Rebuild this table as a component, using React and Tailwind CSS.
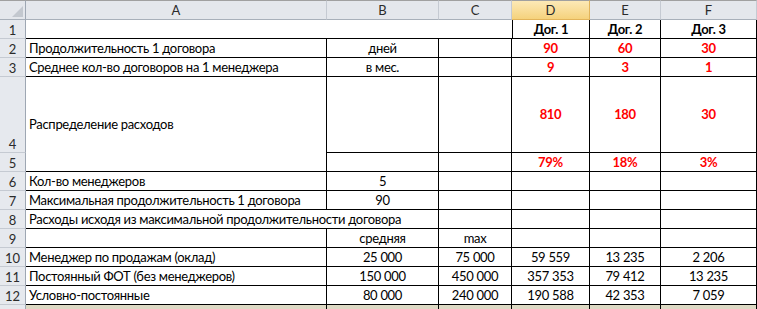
import React from "react";

const BK = "border-black";

function C({ children, className = "" }) {
  return (
    <div className={`flex border-r border-b ${BK} whitespace-nowrap ${className}`}>
      {children}
    </div>
  );
}

function RH({ n, className = "" }) {
  return (
    <div className={`flex items-end justify-center border-r border-b border-r-[#9EA7B3] border-b-[#C5CAD2] bg-[#E6E9EE] text-[#2B2B2B] pb-[1px] tracking-normal ${className}`}>
      {n}
    </div>
  );
}

function CH({ l, className = "" }) {
  return (
    <div className={`flex items-center justify-center border-r border-b border-t border-t-[#A0A0A0] border-r-[#C5CAD2] border-b-[#A8B0BA] bg-[#E4E7EC] text-[#2B2B2B] tracking-normal ${className}`}>
      {l}
    </div>
  );
}

const red = "text-[#FF0000] font-bold";

export default function App() {
  return (
    <div className="w-[757px] h-[309px] overflow-hidden bg-white font-[Lato,Liberation_Sans,sans-serif] text-[13px] tracking-[-0.3px] text-black leading-none">
      <div className="grid grid-cols-[26px_301px_112px_73px_78px_71px_96px] grid-rows-[20px_19px_19px_19px_76px_19px_19px_19px_19px_19px_19px_19px_19px_19px]">
        {/* header */}
        <div className="relative border-r border-b border-t border-t-[#A0A0A0] border-r-[#9EA7B3] border-b-[#A8B0BA] bg-[#E4E7EC]">
          <svg className="absolute right-[2px] bottom-[2px]" width="11" height="11" viewBox="0 0 11 11">
            <polygon points="11,0 11,11 0,11" fill="#C3C8CF" />
          </svg>
        </div>
        <CH l="A" />
        <CH l="B" />
        <CH l="C" />
        <CH l="D" className="bg-gradient-to-b from-[#FCE9B6] to-[#F5D27C] border-r-[#E2B45A] border-b-[#E2B45A]" />
        <CH l="E" />
        <CH l="F" />

        {/* row 1 */}
        <RH n="1" />
        <div className="border-b border-black" />
        <div className="border-b border-black" />
        <div className="border-b border-black" />
        <C className="items-end justify-center pb-[2px] font-bold border-l">Дог. 1</C>
        <C className="items-end justify-center pb-[2px] font-bold">Дог. 2</C>
        <C className="items-end justify-center pb-[2px] font-bold">Дог. 3</C>

        {/* row 2 */}
        <RH n="2" />
        <C className="items-end pl-[3px] pb-[2px]">Продолжительность 1 договора</C>
        <C className="items-end justify-center pb-[2px]">дней</C>
        <C />
        <C className={`items-end justify-center pb-[2px] ${red}`}>90</C>
        <C className={`items-end justify-center pb-[2px] ${red}`}>60</C>
        <C className={`items-end justify-center pb-[2px] ${red}`}>30</C>

        {/* row 3 */}
        <RH n="3" />
        <C className="items-end pl-[3px] pb-[2px]">Среднее кол-во договоров на 1 менеджера</C>
        <C className="items-end justify-center pb-[2px]">в мес.</C>
        <C />
        <C className={`items-end justify-center pb-[2px] ${red}`}>9</C>
        <C className={`items-end justify-center pb-[2px] ${red}`}>3</C>
        <C className={`items-end justify-center pb-[2px] ${red}`}>1</C>

        {/* row 4 */}
        <RH n="4" />
        <C className="row-span-2 items-center pl-[3px]">Распределение расходов</C>
        <C />
        <C />
        <C className={`items-center justify-center ${red}`}>810</C>
        <C className={`items-center justify-center ${red}`}>180</C>
        <C className={`items-center justify-center ${red}`}>30</C>

        {/* row 5 */}
        <RH n="5" />
        <C />
        <C />
        <C className={`items-end justify-center pb-[2px] ${red}`}>79%</C>
        <C className={`items-end justify-center pb-[2px] ${red}`}>18%</C>
        <C className={`items-end justify-center pb-[2px] ${red}`}>3%</C>

        {/* row 6 */}
        <RH n="6" />
        <C className="items-end pl-[3px] pb-[2px]">Кол-во менеджеров</C>
        <C className="items-end justify-center pb-[2px]">5</C>
        <C />
        <C />
        <C />
        <C />

        {/* row 7 */}
        <RH n="7" />
        <C className="items-end pl-[3px] pb-[2px]">Максимальная продолжительность 1 договора</C>
        <C className="items-end justify-center pb-[2px]">90</C>
        <C />
        <C />
        <C />
        <C />

        {/* row 8 */}
        <RH n="8" />
        <C className="col-span-2 items-end pl-[3px] pb-[2px]">Расходы исходя из максимальной продолжительности договора</C>
        <C />
        <C />
        <C />
        <C />

        {/* row 9 */}
        <RH n="9" />
        <C />
        <C className="items-end justify-center pb-[2px]">средняя</C>
        <C className="items-end justify-center pb-[2px]">max</C>
        <C />
        <C />
        <C />

        {/* rows 10-12 */}
        {[
          ["10", "Менеджер по продажам (оклад)", "25 000", "75 000", "59 559", "13 235", "2 206"],
          ["11", "Постоянный ФОТ (без менеджеров)", "150 000", "450 000", "357 353", "79 412", "13 235"],
          ["12", "Условно-постоянные", "80 000", "240 000", "190 588", "42 353", "7 059"],
        ].map((r) => (
          <React.Fragment key={r[0]}>
            <RH n={r[0]} />
            <C className="items-end pl-[3px] pb-[2px]">{r[1]}</C>
            <C className="items-end justify-center pb-[2px]">{r[2]}</C>
            <C className="items-end justify-center pb-[2px]">{r[3]}</C>
            <C className="items-end justify-center pb-[2px]">{r[4]}</C>
            <C className="items-end justify-center pb-[2px]">{r[5]}</C>
            <C className="items-end justify-center pb-[2px]">{r[6]}</C>
          </React.Fragment>
        ))}

        {/* row 13 (mostly cut off) */}
        <RH n="" />
        <C className="bg-[#DDD9C4]" />
        <C className="bg-[#DDD9C4]" />
        <C className="bg-[#DDD9C4]" />
        <C className="bg-[#DDD9C4]" />
        <C className="bg-[#DDD9C4]" />
        <C className="bg-[#DDD9C4]" />
      </div>
    </div>
  );
}
